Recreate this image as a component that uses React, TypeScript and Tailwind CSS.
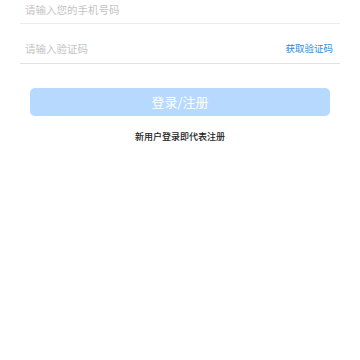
import React from "react";

export default function App() {
  const font = { fontFamily: '"Noto Sans CJK SC", "Noto Sans", sans-serif' };
  return (
    <div className="w-[360px] h-[360px] bg-white overflow-hidden" style={font}>
      <div className="px-5">
        <div className="h-[24px] flex items-end pb-[7px] border-b border-[#ececec]">
          <input
            className="pl-[5px] w-full outline-none text-[10.5px] leading-[13px] text-[#333] placeholder:text-[#c4c4c4] bg-transparent"
            placeholder="请输入您的手机号码"
          />
        </div>
        <div className="h-[40px] flex items-end pb-[8px] border-b border-[#e2e2e2]">
          <input
            className="pl-[5px] flex-1 min-w-0 outline-none text-[10.5px] leading-[13px] text-[#333] placeholder:text-[#c4c4c4] bg-transparent"
            placeholder="请输入验证码"
          />
          <span className="pr-[7px] text-[9.5px] leading-[13px] text-[#2f8de4] whitespace-nowrap">获取验证码</span>
        </div>
      </div>
      <div className="mx-[30px] mt-[24px] h-[28px] rounded-[5px] bg-[#b6d9fd] flex items-center justify-center">
        <span className="text-white text-[13px] leading-[16px]">登录/注册</span>
      </div>
      <div className="mt-[15px] text-center text-[9px] leading-[12px] font-medium text-[#222]">新用户登录即代表注册</div>
    </div>
  );
}
